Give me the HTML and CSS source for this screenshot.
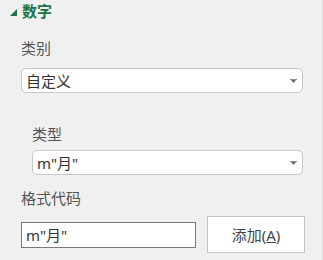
FILE: index.html
```html
<!DOCTYPE html>
<html lang="zh-CN">
<head>
<meta charset="utf-8">
<link rel="stylesheet" href="styles.css">
</head>
<body>
<div class="panel">
  <div class="section-head">
    <svg class="caret" width="7" height="7" viewBox="0 0 7 7"><polygon points="7,0 7,7 0,7" fill="#217346"/></svg>
    <span class="section-title">数字</span>
  </div>
  <div class="label label-cat">类别</div>
  <div class="select select-cat">
    <span class="select-text">自定义</span>
    <svg class="arrow" width="7" height="4" viewBox="0 0 7 4"><rect x="0" y="0" width="7" height="1" fill="#888"/><polygon points="1,1 6,1 3.5,4" fill="#666"/></svg>
  </div>
  <div class="label label-type">类型</div>
  <div class="select select-type">
    <span class="select-text">m"月"</span>
    <svg class="arrow" width="7" height="4" viewBox="0 0 7 4"><rect x="0" y="0" width="7" height="1" fill="#888"/><polygon points="1,1 6,1 3.5,4" fill="#666"/></svg>
  </div>
  <div class="label label-code">格式代码</div>
  <div class="code-row">
    <div class="code-input">m"月"</div>
    <button class="add-btn">添加(<u>A</u>)</button>
  </div>
</div>
</body>
</html>
```
FILE: styles.css
```css
html, body {
  margin: 0;
  padding: 0;
  background: #f0f0f0;
}
body {
  width: 323px;
  height: 260px;
  overflow: hidden;
  font-family: "Noto Sans", "Noto Sans CJK SC", sans-serif;
  font-size: 15px;
  color: #444;
  border-right: 1px solid #e2e2e2;
  box-sizing: border-box;
}
.panel {
  display: flex;
  flex-direction: column;
}
.section-head {
  display: flex;
  align-items: center;
  height: 22px;
  padding-left: 10px;
}
.caret {
  margin-top: 3px;
  margin-right: 5px;
}
.section-title {
  font-size: 15px;
  font-weight: bold;
  color: #217346;
  line-height: 22px;
}
.label {
  line-height: 22px;
  font-size: 15px;
  color: #555;
  margin-left: 21px;
}
.label-cat { margin-top: 15px; }
.label-type { margin-top: 30px; margin-left: 32px; }
.label-code { margin-top: 12px; }
.select {
  display: flex;
  align-items: center;
  justify-content: space-between;
  box-sizing: border-box;
  height: 25px;
  background: #fff;
  border: 1px solid #c8c8c8;
  border-radius: 5px;
  padding: 0 5px 0 4px;
  color: #333;
  font-size: 15px;
}
.select-cat {
  margin: 9px 0 0 21px;
  width: 282px;
}
.select-type {
  margin: 5px 0 0 32px;
  width: 271px;
}
.code-row {
  display: flex;
  align-items: center;
  margin: 7px 0 0 21px;
  gap: 11px;
}
.code-input {
  box-sizing: border-box;
  width: 175px;
  height: 26px;
  background: #fff;
  border: 1px solid #7a7a7a;
  padding: 0 4px;
  line-height: 24px;
  color: #333;
  font-size: 15px;
}
.add-btn {
  box-sizing: border-box;
  width: 98px;
  height: 37px;
  background: #fff;
  border: 1px solid #c3c3c3;
  border-radius: 0;
  font-family: "Noto Sans", "Noto Sans CJK SC", sans-serif;
  font-size: 15px;
  color: #444;
  padding: 0;
}
```
